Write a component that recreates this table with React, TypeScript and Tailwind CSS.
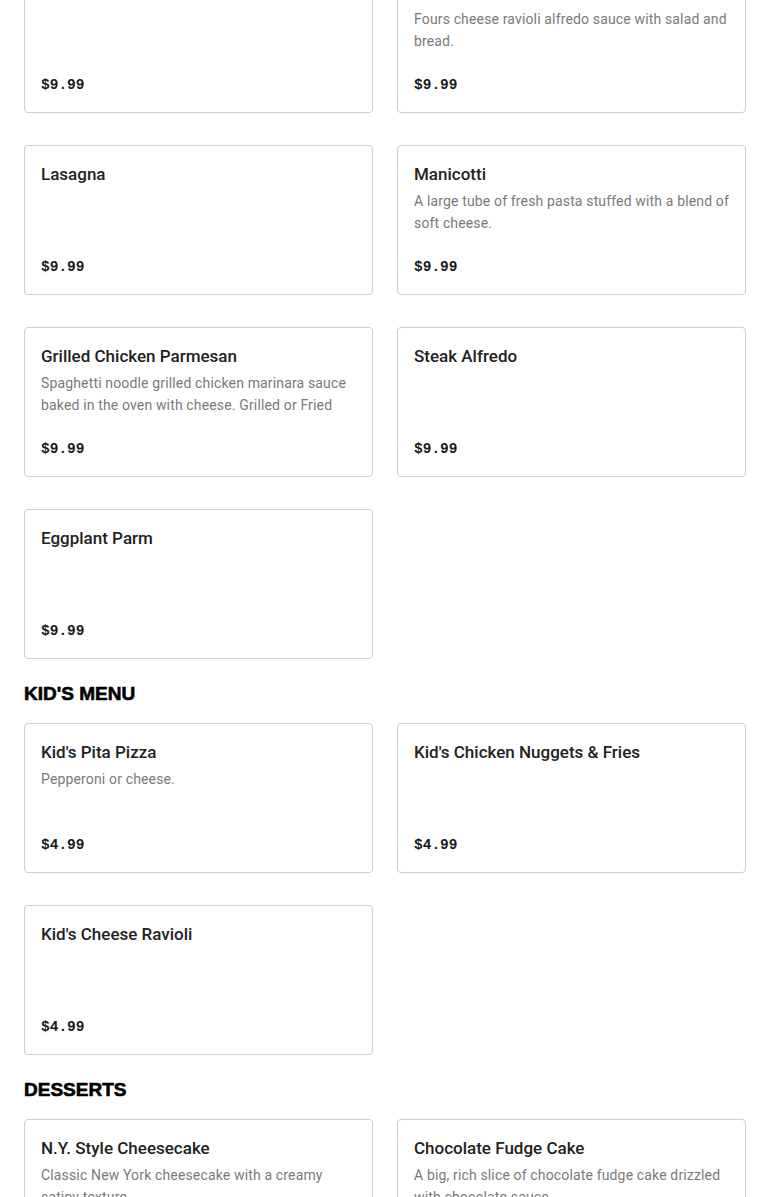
const sections = [
  {
    title: "",
    items: [
      { name: "Fettuccine Alfredo", desc: "", price: "$9.99" },
      {
        name: "Ravioli Alfredo",
        desc: "Fours cheese ravioli alfredo sauce with salad and bread.",
        price: "$9.99",
      },
      { name: "Lasagna", desc: "", price: "$9.99" },
      {
        name: "Manicotti",
        desc: "A large tube of fresh pasta stuffed with a blend of soft cheese.",
        price: "$9.99",
      },
      {
        name: "Grilled Chicken Parmesan",
        desc: "Spaghetti noodle grilled chicken marinara sauce baked in the oven with cheese. Grilled or Fried",
        price: "$9.99",
      },
      { name: "Steak Alfredo", desc: "", price: "$9.99" },
      { name: "Eggplant Parm", desc: "", price: "$9.99" },
    ],
  },
  {
    title: "KID'S MENU",
    items: [
      { name: "Kid's Pita Pizza", desc: "Pepperoni or cheese.", price: "$4.99" },
      { name: "Kid's Chicken Nuggets & Fries", desc: "", price: "$4.99" },
      { name: "Kid's Cheese Ravioli", desc: "", price: "$4.99" },
    ],
  },
  {
    title: "DESSERTS",
    items: [
      {
        name: "N.Y. Style Cheesecake",
        desc: "Classic New York cheesecake with a creamy satiny texture.",
        price: "$5.99",
      },
      {
        name: "Chocolate Fudge Cake",
        desc: "A big, rich slice of chocolate fudge cake drizzled with chocolate sauce.",
        price: "$5.99",
      },
    ],
  },
];

function MenuCard({ name, desc, price }: { name: string; desc: string; price: string }) {
  return (
    <div className="flex h-[150px] flex-col overflow-hidden rounded border border-[#cfcfcf] bg-white px-4 pt-4 pb-[17px]">
      <h3 className="text-[17px] leading-6 font-medium text-[#222] [font-family:Roboto,sans-serif]">
        {name}
      </h3>
      {desc && (
        <p className="mt-1 text-[14px] leading-[22px] tracking-[0.15px] text-[#7a7a7a] [font-family:Roboto,sans-serif]">
          {desc}
        </p>
      )}
      <p className="mt-auto text-[14.5px] leading-5 font-bold text-[#1a1a1a] [font-family:'Liberation_Mono',monospace]">
        {price}
      </p>
    </div>
  );
}

export default function App() {
  return (
    <div className="h-[1197px] overflow-hidden bg-white">
      <div className="-mt-[37px] px-6">
        {sections.map((s, i) => (
          <section key={i} className={i > 0 ? "mt-[21px]" : ""}>
            {s.title && (
              <h2 className="mb-[15px] text-[19px] leading-7 font-extrabold text-black [-webkit-text-stroke:0.6px_black] [font-family:'Liberation_Sans',Arial,sans-serif]">
                {s.title}
              </h2>
            )}
            <div className="grid grid-cols-2 gap-x-6 gap-y-8">
              {s.items.map((it) => (
                <MenuCard key={it.name} {...it} />
              ))}
            </div>
          </section>
        ))}
      </div>
    </div>
  );
}
